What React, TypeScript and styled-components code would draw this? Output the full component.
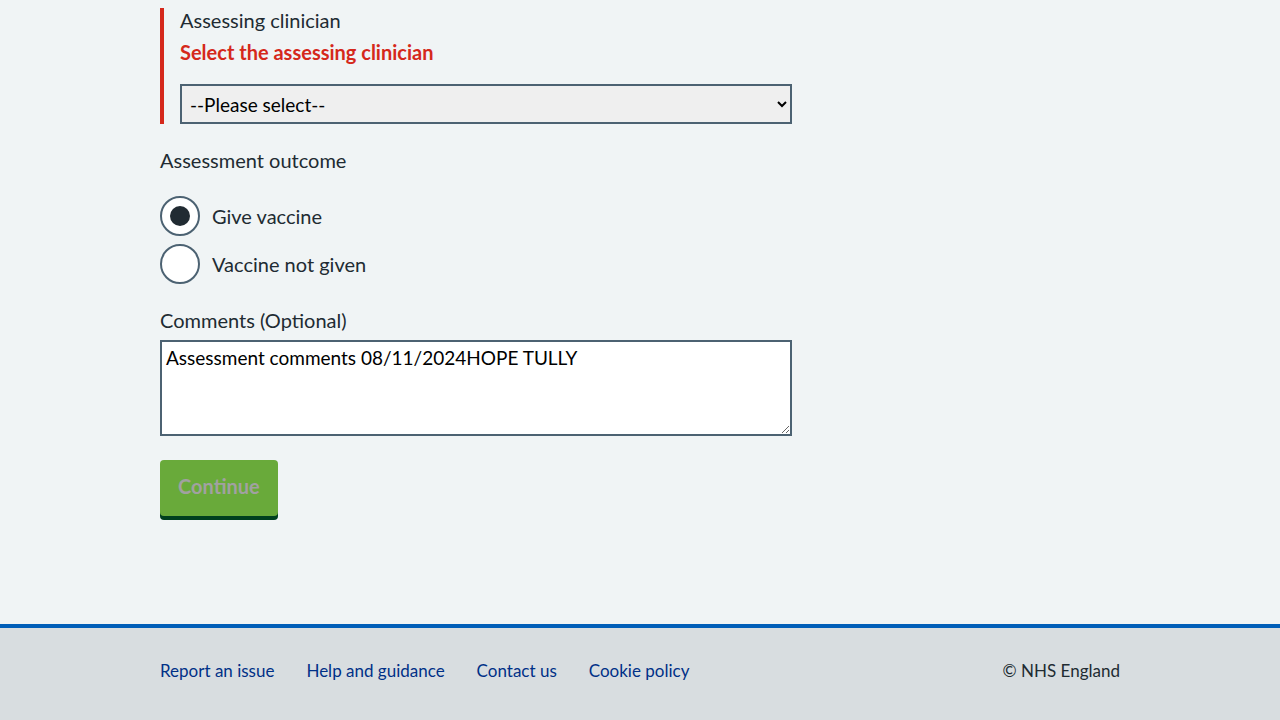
import styled, { createGlobalStyle } from "styled-components";

// Page level reset, NHS-ish grey background.
const GlobalStyle = createGlobalStyle`
  html, body {
    margin: 0;
    padding: 0;
    background: #f0f4f5;
    color: #212b32;
    font-family: Lato, "Liberation Sans", Arial, sans-serif;
  }
`;

const Page = styled.div`
  min-height: 100vh;
  display: flex;
  flex-direction: column;
`;

const Main = styled.main`
  flex: 1;
  width: 960px;
  margin: 0 auto;
  padding-top: 8px;
`;

const Form = styled.form`
  width: 632px;
`;

// Form group, red left border when it holds an error.
const FormGroup = styled.div<{ $error?: boolean }>`
  margin-bottom: 22px;
  ${(p) =>
    p.$error &&
    `
    border-left: 4px solid #d5281b;
    padding-left: 16px;
  `}
`;

const Label = styled.label`
  display: block;
  font-size: 20px;
  line-height: 28px;
  margin-bottom: 6px;
`;

const ErrorLabel = styled(Label)`
  line-height: 24px;
  margin-bottom: 6px;
`;

const ErrorMessage = styled.span`
  display: block;
  color: #d5281b;
  font-weight: 700;
  font-size: 20px;
  line-height: 28px;
  margin-bottom: 18px;
`;

const Select = styled.select`
  display: block;
  width: 100%;
  height: 40px;
  box-sizing: border-box;
  border: 2px solid #4c6272;
  border-radius: 0;
  background: #efefef;
  color: #000;
  font-family: inherit;
  font-size: 19px;
  padding: 0 4px;
`;

const Fieldset = styled.fieldset`
  border: 0;
  margin: 0 0 22px;
  padding: 0;
`;

const Legend = styled.legend`
  padding: 0;
  font-size: 20px;
  line-height: 28px;
  margin-bottom: 22px;
`;

const RadioRow = styled.label`
  display: flex;
  align-items: center;
  gap: 12px;
  font-size: 20px;
  line-height: 28px;
  margin-bottom: 8px;
  cursor: pointer;
  &:last-child {
    margin-bottom: 0;
  }
`;

const RadioCircle = styled.span<{ $checked?: boolean }>`
  width: 40px;
  height: 40px;
  box-sizing: border-box;
  border: 2px solid #4c6272;
  border-radius: 50%;
  background: #fff;
  display: flex;
  align-items: center;
  justify-content: center;
  &::after {
    content: "";
    width: 20px;
    height: 20px;
    border-radius: 50%;
    background: #212b32;
    display: ${(p) => (p.$checked ? "block" : "none")};
  }
`;

const TextArea = styled.textarea`
  display: block;
  width: 100%;
  height: 96px;
  box-sizing: border-box;
  border: 2px solid #4c6272;
  border-radius: 0;
  background: #fff;
  color: #000;
  font-family: inherit;
  font-size: 19px;
  line-height: 24px;
  padding: 4px;
  margin: 0;
`;

const Button = styled.button`
  margin-top: 2px;
  background: #69aa3a;
  color: #a1a1a1;
  border: 0;
  border-radius: 4px;
  box-shadow: 0 4px 0 #00401e;
  font-family: inherit;
  font-weight: 700;
  font-size: 20px;
  line-height: 24px;
  padding: 14px 18px 18px;
`;

const Footer = styled.footer`
  background: #d8dde0;
  border-top: 4px solid #005eb8;
  padding: 31px 0 37px;
`;

const FooterInner = styled.div`
  width: 960px;
  margin: 0 auto;
  display: flex;
  justify-content: space-between;
  font-size: 17px;
  line-height: 24px;
`;

const FooterLinks = styled.ul`
  list-style: none;
  margin: 0;
  padding: 0;
  display: flex;
  gap: 32px;
  a {
    color: #003087;
    text-decoration: none;
  }
`;

const Copyright = styled.p`
  margin: 0;
  color: #212b32;
`;

const links = ["Report an issue", "Help and guidance", "Contact us", "Cookie policy"];

function App() {
  return (
    <Page>
      <GlobalStyle />
      <Main>
        <Form onSubmit={(e) => e.preventDefault()}>
          <FormGroup $error>
            <ErrorLabel htmlFor="clinician">Assessing clinician</ErrorLabel>
            <ErrorMessage>Select the assessing clinician</ErrorMessage>
            <Select id="clinician" defaultValue="">
              <option value="">--Please select--</option>
            </Select>
          </FormGroup>

          <Fieldset>
            <Legend>Assessment outcome</Legend>
            <RadioRow>
              <RadioCircle $checked />
              Give vaccine
            </RadioRow>
            <RadioRow>
              <RadioCircle />
              Vaccine not given
            </RadioRow>
          </Fieldset>

          <FormGroup>
            <Label htmlFor="comments">Comments (Optional)</Label>
            <TextArea
              id="comments"
              defaultValue="Assessment comments 08/11/2024HOPE TULLY"
            />
          </FormGroup>

          <Button type="submit">Continue</Button>
        </Form>
      </Main>
      <Footer>
        <FooterInner>
          <FooterLinks>
            {links.map((l) => (
              <li key={l}>
                <a href="#">{l}</a>
              </li>
            ))}
          </FooterLinks>
          <Copyright>© NHS England</Copyright>
        </FooterInner>
      </Footer>
    </Page>
  );
}

export default App;
